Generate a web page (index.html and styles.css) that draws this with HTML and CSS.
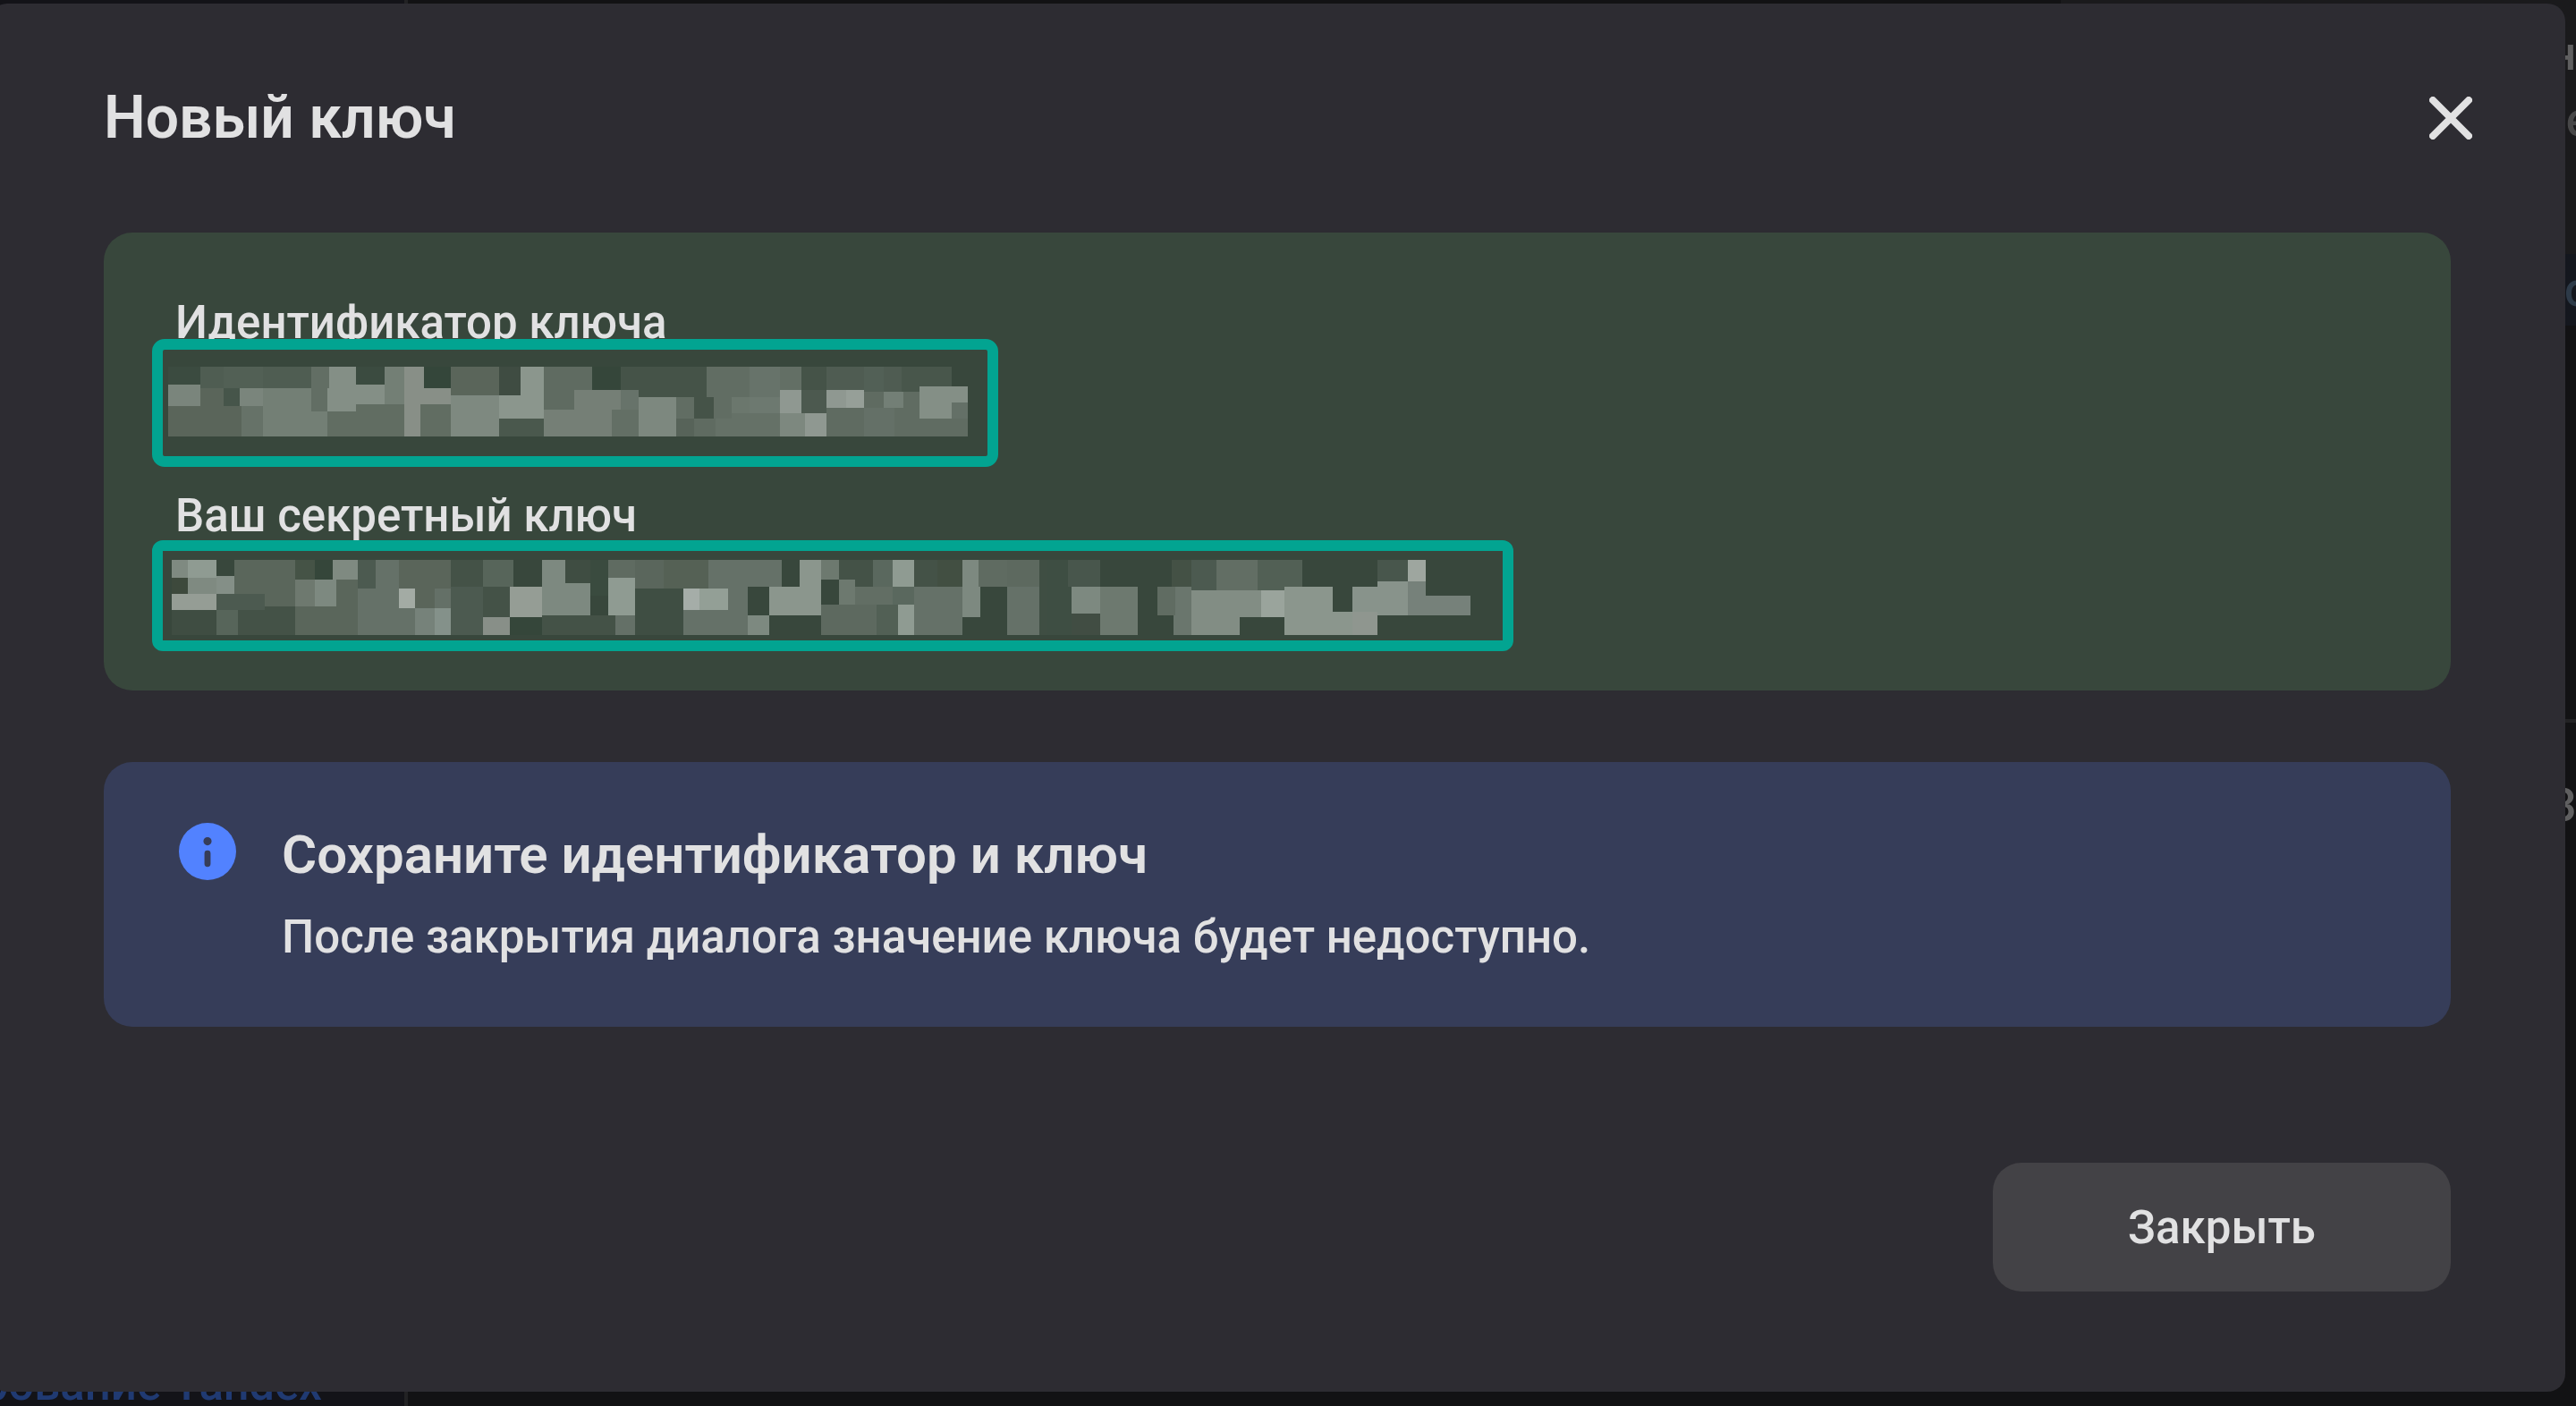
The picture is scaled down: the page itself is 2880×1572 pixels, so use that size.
FILE: index.html
```html
<!DOCTYPE html>
<html lang="ru">
<head>
<meta charset="utf-8">
<meta name="viewport" content="width=device-width, initial-scale=1">
<title>Новый ключ</title>
<link rel="stylesheet" href="styles.css">
</head>
<body>
<div class="page" aria-hidden="true">
  <nav class="sidebar"><a class="sidebar__link" href="#" tabindex="-1">рование Yandex</a></nav>
  <main class="content"></main>
  <aside class="details">
    <div class="details__head">
      <p class="details__name">н</p>
      <p class="details__note">е</p>
    </div>
    <div class="details__tab">о</div>
    <div class="details__empty"></div>
    <div class="details__section">З</div>
  </aside>
</div>

<section class="modal" role="dialog" aria-modal="true" aria-labelledby="modal-title">
  <header class="modal__header">
    <h1 class="modal__title" id="modal-title">Новый ключ</h1>
    <button class="close" type="button" aria-label="Закрыть окно">
      <svg class="close__icon" viewBox="0 0 48 48" aria-hidden="true"><path d="M4 4L44 44M44 4L4 44" fill="none" stroke="currentColor" stroke-width="8" stroke-linecap="round"/></svg>
    </button>
  </header>

  <div class="card card--success">
    <div class="field">
      <p class="field__label">Идентификатор ключа</p>
      <div class="frame frame--id">
        <svg class="mosaic mosaic--id" viewBox="114 270 2682 234" preserveAspectRatio="none" shape-rendering="crispEdges" role="img" aria-label="Значение скрыто">
          <g>
            <path fill="#3b4b40" d="M114 270H222V330H114zM744 270H840V330H744z"/>
            <path fill="#7a857c" d="M114 330H222V402H114zM354 342H432V402H354z"/>
            <path fill="#5a655a" d="M222 342H300V402H222zM114 402H360V504H114zM1062 270H1224V366H1062z"/>
            <path fill="#4f5d52" d="M222 270H300V342H222zM432 270H594V342H432z"/>
            <path fill="#526055" d="M300 270H432V342H300z"/>
            <path fill="#46554a" d="M300 342H354V402H300z"/>
            <path fill="#667268" d="M360 402H432V504H360z"/>
            <path fill="#737f75" d="M432 342H594V504H432zM594 420H648V504H594zM840 270H906V396H840z"/>
            <path fill="#626e64" d="M594 270H654V342H594zM594 342H648V420H594z"/>
            <path fill="#848f86" d="M654 270H744V342H654zM648 342H744V420H648zM744 330H840V396H744z"/>
            <path fill="#616d62" d="M744 396H906V504H648V420H744zM960 396H1062V504H960z"/>
            <path fill="#888f87" d="M906 270H972V342H1062V396H960V504H906z"/>
            <path fill="#34463a" d="M972 270H1062V342H972z"/>
            <path fill="#7e8980" d="M1062 366H1224V504H1062z"/>
            <path fill="#3f4c42" d="M1224 270H1296V366H1224z"/>
            <path fill="#8b968d" d="M1296 270H1374V444H1224V366H1296z"/>
            <path fill="#4a584d" d="M1224 444H1374V504H1224z"/>
            <path fill="#5f6b61" d="M1374 270H1536V348H1476V414H1374z"/>
            <path fill="#757f76" d="M1476 348H1632V414H1602V504H1374V414H1476z"/>
          </g>
          <g transform="translate(1470)">
            <path fill="#35463a" d="M66 270H162V348H66z"/>
            <path fill="#455348" d="M162 270H450V372H222V348H162zM408 372H474V444H408zM768 270H852V348H768z"/>
            <path fill="#67736a" d="M162 348H222V414H162zM594 270H696V372H594z"/>
            <path fill="#636f65" d="M132 414H222V504H132zM696 270H768V348H696z"/>
            <path fill="#7d887f" d="M222 372H348V504H222zM696 426H780V504H696z"/>
            <path fill="#616d63" d="M348 372H408V444H348zM450 270H594V372H534V444H474V372H450z"/>
            <path fill="#576359" d="M348 444H408V504H348z"/>
            <path fill="#5f6b61" d="M408 444H480V504H408zM978 354H1044V408H978zM852 408H978V504H852z"/>
            <path fill="#6b776d" d="M534 372H594V426H534z"/>
            <path fill="#6d7970" d="M594 372H696V426H594z"/>
            <path fill="#657167" d="M534 426H696V504H480V444H534z"/>
            <path fill="#8f9891" d="M696 348H768V426H696zM780 426H852V504H780zM852 348H918V408H852z"/>
            <path fill="#4c594f" d="M768 348H852V426H768z"/>
            <path fill="#4f5c52" d="M852 270H978V348H852zM1044 270H1104V354H1044z"/>
            <path fill="#969f98" d="M918 348H978V408H918z"/>
            <path fill="#526056" d="M978 270H1044V354H978z"/>
            <path fill="#737f76" d="M1044 354H1110V408H1044z"/>
            <path fill="#48564b" d="M1104 270H1272V354H1104z"/>
            <path fill="#606c62" d="M1110 354H1164V444H1326V504H1080V408H1110z"/>
            <path fill="#647067" d="M978 408H1080V504H978zM1272 390H1326V444H1272z"/>
            <path fill="#848f86" d="M1164 336H1326V390H1272V444H1164z"/>
          </g>
        </svg>
      </div>
    </div>

    <div class="field field--secret">
      <p class="field__label">Ваш секретный ключ</p>
      <div class="frame frame--secret">
        <svg class="mosaic mosaic--secret" viewBox="126 258 4356 252" preserveAspectRatio="none" shape-rendering="crispEdges" role="img" aria-label="Значение скрыто">
          <g>
            <path fill="#7f8a81" d="M126 258H180V318H126zM180 318H276V372H180zM666 258H750V324H666z"/>
            <path fill="#8f9b92" d="M180 258H276V318H180z"/>
            <path fill="#3d493c" d="M126 318H180V372H126z"/>
            <path fill="#848f87" d="M276 312H336V372H276z"/>
            <path fill="#959d95" d="M126 372H276V426H126zM1260 348H1368V450H1260z"/>
            <path fill="#3f4d42" d="M126 426H276V510H126zM1446 258H1530V336H1446z"/>
            <path fill="#4c5a50" d="M276 372H438V426H276zM750 258H810V354H750zM1062 348H1170V510H1062z"/>
            <path fill="#5a665b" d="M336 258H540V414H438V372H336zM678 324H750V510H540V414H678z"/>
            <path fill="#57655a" d="M276 426H348V510H276zM1170 258H1272V348H1170z"/>
            <path fill="#445247" d="M438 414H540V510H348V426H438zM1062 258H1170V348H1062zM1170 348H1260V450H1170zM1368 444H1614V510H1368z"/>
            <path fill="#455346" d="M540 258H606V324H540z"/>
            <path fill="#35463a" d="M606 258H666V324H606zM1260 450H1368V510H1260z"/>
            <path fill="#6e796f" d="M540 324H606V414H540z"/>
            <path fill="#7d8980" d="M606 324H678V414H606zM1368 258H1446V336H1530V444H1368z"/>
            <path fill="#657168" d="M810 258H888V354H942V510H750V354H810z"/>
            <path fill="#5a655a" d="M888 258H1062V354H1008V420H942V354H888z"/>
            <path fill="#a3aba4" d="M888 354H942V420H888z"/>
            <path fill="#647067" d="M1008 354H1062V420H1008z"/>
            <path fill="#76827a" d="M942 420H1008V510H942z"/>
            <path fill="#84918a" d="M1008 420H1062V510H1008z"/>
            <path fill="#888f88" d="M1170 450H1260V510H1170z"/>
          </g>
          <g transform="translate(1530)">
            <path fill="#3a4b3f" d="M0 258H60V378H0z"/>
            <path fill="#5f6b61" d="M60 258H150V318H60zM1302 258H1398V348H1302z"/>
            <path fill="#8f9b92" d="M60 318H150V444H60zM1014 258H1086V348H1014zM1032 408H1086V510H1032z"/>
            <path fill="#647067" d="M84 444H150V510H84z"/>
            <path fill="#5a665c" d="M150 258H246V354H150z"/>
            <path fill="#556155" d="M246 258H396V354H246z"/>
            <path fill="#3f4e43" d="M150 354H312V510H150zM1506 258H1530V510H1506z"/>
            <path fill="#a5ada8" d="M312 354H366V426H312z"/>
            <path fill="#939f96" d="M366 354H462V426H366z"/>
            <path fill="#657168" d="M396 258H642V348H528V510H312V426H462V354H396zM1086 348H1248V510H1086zM1398 348H1506V510H1398z"/>
            <path fill="#7d8980" d="M528 444H600V510H528zM1248 258H1302V348H1308V450H1248z"/>
            <path fill="#8b968d" d="M702 258H774V444H600V348H702z"/>
            <path fill="#6d796f" d="M774 258H834V324H774zM834 324H888V408H834z"/>
            <path fill="#445247" d="M834 258H948V348H888V324H834zM1086 258H1164V348H1086z"/>
            <path fill="#626e64" d="M888 348H1014V408H888z"/>
            <path fill="#5a685e" d="M948 258H1014V348H948zM1014 348H1086V408H1014z"/>
            <path fill="#5d695f" d="M774 408H960V510H774zM1398 258H1506V348H1398z"/>
            <path fill="#526055" d="M960 408H1032V510H960z"/>
            <path fill="#424f42" d="M1164 258H1248V348H1164z"/>
          </g>
          <g transform="translate(3060) scale(1.0714 1)">
            <path fill="#3e4e43" d="M0 258H67V348H78V510H0z"/>
            <path fill="#48564c" d="M67 258H168V348H67zM1036 258H1131V330H1036z"/>
            <path fill="#7d8980" d="M78 348H168V438H78z"/>
            <path fill="#414d43" d="M78 438H168V510H78z"/>
            <path fill="#6d796f" d="M168 348H286V510H168z"/>
            <path fill="#606c62" d="M347 348H403V444H347z"/>
            <path fill="#6a766d" d="M403 348H454V510H398V444H403z"/>
            <path fill="#445145" d="M392 258H454V348H392z"/>
            <path fill="#4c5a50" d="M454 258H532V360H454z"/>
            <path fill="#626e64" d="M532 258H661V360H532z"/>
            <path fill="#526055" d="M661 258H801V348H745V360H661z"/>
            <path fill="#828d84" d="M454 360H672V450H605V510H454z"/>
            <path fill="#9aa49c" d="M672 360H745V450H672z"/>
            <path fill="#8b968d" d="M745 348H896V432H958V510H745z"/>
            <path fill="#8f968f" d="M958 432H1036V510H958z"/>
            <path fill="#88938b" d="M1036 330H1131V444H1036V432H958V348H1036z"/>
            <path fill="#9ea69f" d="M1131 258H1187V330H1131z"/>
            <path fill="#76817a" d="M1131 330H1187V378H1327V444H1131z"/>
          </g>
        </svg>
      </div>
    </div>
  </div>

  <div class="card card--info">
    <svg class="card__icon" viewBox="1 1 14 14" aria-hidden="true"><path fill="currentColor" fill-rule="evenodd" d="M8 15A7 7 0 1 0 8 1a7 7 0 0 0 0 14m1-9.5a1 1 0 1 1-2 0 1 1 0 0 1 2 0m-.25 3a.75.75 0 0 0-1.5 0V11a.75.75 0 0 0 1.5 0z"/></svg>
    <div class="card__body">
      <h2 class="card__title">Сохраните идентификатор и ключ</h2>
      <p class="card__text">После закрытия диалога значение ключа будет недоступно.</p>
    </div>
  </div>

  <footer class="modal__footer">
    <button class="button" type="button">Закрыть</button>
  </footer>
</section>
</body>
</html>
```
FILE: styles.css
```css
* {
  box-sizing: border-box;
}

body,
h1,
h2,
p {
  margin: 0;
}

body {
  position: relative;
  min-height: 100vh;
  overflow: hidden;
  background: #121214;
  color: #e1e1e2;
  font-family: Roboto, "Noto Sans", sans-serif;
  font-size: 51px;
  font-weight: 500;
}

/* Dimmed page behind the dialog */

.page {
  display: grid;
  grid-template-columns: 456px 1fr 576px;
  min-height: 100vh;
  line-height: 48px;
}

.sidebar {
  display: flex;
  flex-direction: column;
  justify-content: flex-end;
  align-items: flex-end;
  padding-right: 92px;
  border-right: 4px solid #222224;
  background: #131318;
}

.sidebar__link {
  color: #203a72;
  text-decoration: none;
  white-space: nowrap;
}

.details {
  text-align: right;
  color: #5f5f60;
}

.details__head {
  height: 284px;
  padding-top: 37px;
  background: #1a1a1c;
}

.details__note {
  margin: 26px -16px 0 0;
  color: #474748;
}

.details__tab {
  height: 80px;
  margin-right: -16px;
  padding-top: 17px;
  background: #14171e;
  color: #2d3a48;
}

.details__empty {
  height: 444px;
  border-bottom: 4px solid #222224;
}

.details__section {
  padding-top: 69px;
}

/* Dialog */

.modal {
  position: absolute;
  top: 4px;
  right: 12px;
  left: -12px;
  padding: 88px 128px 112px;
  border-radius: 20px;
  background: #2d2c32;
}

.modal__header {
  display: flex;
  align-items: center;
  justify-content: space-between;
  margin-bottom: 88px;
}

.modal__title {
  font-size: 66px;
  font-weight: 600;
  line-height: 80px;
}

.close {
  width: 48px;
  height: 48px;
  margin-right: -24px;
  padding: 0;
  border: 0;
  background: none;
  color: inherit;
  cursor: pointer;
}

.close__icon {
  display: block;
  width: 100%;
  height: 100%;
}

.modal__footer {
  display: flex;
  justify-content: flex-end;
  margin-top: 152px;
}

.button {
  width: 512px;
  height: 144px;
  border: 0;
  border-radius: 32px;
  background: #434246;
  color: inherit;
  font: inherit;
  cursor: pointer;
}

/* Cards */

.card {
  border-radius: 32px;
}

.card--success {
  padding: 83px 54px 44px;
  background: #38473c;
}

.card--info {
  display: flex;
  gap: 51px;
  margin-top: 80px;
  padding: 68px 84px 64px;
  background: #363d59;
}

.card__icon {
  flex: none;
  width: 64px;
  height: 64px;
  color: #5282ff;
}

.card__title {
  margin-bottom: 20px;
  font-size: 60px;
  font-weight: 600;
  line-height: 72px;
}

.card__text {
  line-height: 72px;
}

/* Key fields with a highlighted, masked value */

.field--secret {
  margin-top: 37px;
}

.field__label {
  padding-left: 26px;
  line-height: 36px;
}

.field--secret .field__label {
  margin-bottom: 9px;
}

.frame {
  position: relative;
  width: fit-content;
  max-width: 100%;
  border: 12px solid #02a491;
  border-radius: 14px;
  background: #38473c;
}

.frame--id {
  padding: 19px 22px 22px 6px;
}

.frame--secret {
  padding: 10px 36px 6px 10px;
  border-radius: 12px;
}

.mosaic {
  display: block;
  max-width: 100%;
}

.mosaic--id {
  width: 894px;
  height: 78px;
}

.mosaic--secret {
  width: 1452px;
  height: 84px;
}
```
